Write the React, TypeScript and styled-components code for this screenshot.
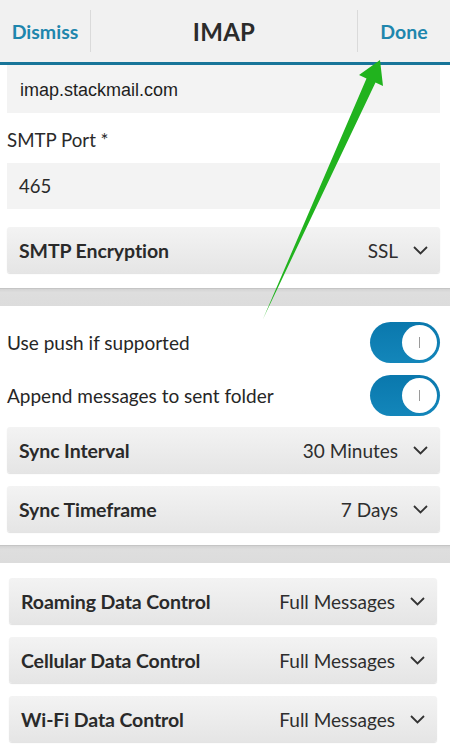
import React from "react"
import styled, { createGlobalStyle } from "styled-components"

const GlobalStyle = createGlobalStyle`
  html, body {
    margin: 0;
    padding: 0;
    background: #ffffff;
  }
  body {
    font-family: Lato, "Open Sans", sans-serif;
    color: #2a2a2a;
  }
`

const Page = styled.div`
  position: relative;
  width: 450px;
  height: 752px;
  overflow: hidden;
  background: #fff;
`

const Header = styled.div`
  display: flex;
  align-items: center;
  height: 62px;
  background: #f1f1f1;
  border-bottom: 3px solid #187599;
`

const HeaderButton = styled.div<{ $width: number }>`
  width: ${(p) => p.$width}px;
  text-align: center;
  font-size: 19.5px;
  font-weight: 700;
  color: #1e86ad;
`

const Title = styled.div`
  flex: 1;
  text-align: center;
  font-size: 24px;
  font-weight: 700;
  color: #2b2b2b;
  letter-spacing: 0.3px;
`

const Divider = styled.div`
  width: 1px;
  height: 42px;
  background: #dadada;
`

const Section = styled.div<{ $top: number; $bottom: number; $left?: number; $right?: number }>`
  display: flex;
  flex-direction: column;
  padding: ${(p) => `${p.$top}px ${p.$right ?? 10}px ${p.$bottom}px ${p.$left ?? 7}px`};
`

const Field = styled.div<{ $height: number }>`
  display: flex;
  align-items: center;
  height: ${(p) => p.$height}px;
  padding-left: 12px;
  background: #f3f3f3;
  font-size: 18.5px;
`

const HostField = styled(Field)`
  font-family: "Liberation Sans", Arial, sans-serif;
  font-size: 18px;
  padding-left: 13px;
  padding-top: 3px;
  box-sizing: border-box;
  color: #1e1e1e;
`

const Label = styled.div`
  display: flex;
  align-items: center;
  height: 50px;
  font-size: 18.7px;
  padding-top: 3px;
  box-sizing: border-box;
`

const Dropdown = styled.div<{ $gap?: number }>`
  display: flex;
  align-items: center;
  height: 46px;
  margin-top: ${(p) => p.$gap ?? 0}px;
  padding: 0 12px 0 12px;
  border-radius: 3px;
  background: linear-gradient(#f3f3f3, #e5e5e5);
  box-shadow: 0 1px 1px rgba(0, 0, 0, 0.12);
`

const DropLabel = styled.div`
  flex: 1;
  font-size: 19.5px;
  font-weight: 700;
  color: #2a2a2a;
  letter-spacing: -0.1px;
`

const DropValue = styled.div`
  font-size: 19px;
  color: #2e2e2e;
  margin-right: 15px;
`

const Band = styled.div`
  height: 17px;
  background: linear-gradient(#d3d3d3, #dedede 20%, #dcdcdc);
  border-top: 1px solid #c5c5c5;
`

const ToggleRow = styled.div`
  display: flex;
  align-items: center;
  justify-content: space-between;
  height: 53px;
`

const ToggleLabel = styled.div`
  font-size: 19px;
  color: #262626;
`

const Track = styled.div`
  display: flex;
  align-items: center;
  justify-content: flex-end;
  width: 70px;
  height: 41px;
  padding-right: 3px;
  box-sizing: border-box;
  border-radius: 21px;
  background: linear-gradient(#0a78ad, #1386ba);
`

const Knob = styled.div`
  display: flex;
  align-items: center;
  justify-content: center;
  width: 35px;
  height: 35px;
  border-radius: 50%;
  background: #fff;
  &::after {
    content: "";
    width: 1px;
    height: 11px;
    background: #9a9a9a;
  }
`

const Overlay = styled.svg`
  position: absolute;
  left: 0;
  top: 0;
  pointer-events: none;
`

const Chevron = () => (
  <svg width="15" height="9" viewBox="0 0 15 9">
    <path d="M1 1 L7.5 7.5 L14 1" fill="none" stroke="#333" strokeWidth="1.8" />
  </svg>
)

const Select = ({ label, value, gap }: { label: string; value: string; gap?: number }) => (
  <Dropdown $gap={gap}>
    <DropLabel>{label}</DropLabel>
    <DropValue>{value}</DropValue>
    <Chevron />
  </Dropdown>
)

const Toggle = ({ label }: { label: string }) => (
  <ToggleRow>
    <ToggleLabel>{label}</ToggleLabel>
    <Track>
      <Knob />
    </Track>
  </ToggleRow>
)

export default function App() {
  return (
    <Page>
      <GlobalStyle />
      <Header>
        <HeaderButton $width={90}>Dismiss</HeaderButton>
        <Divider />
        <Title>IMAP</Title>
        <Divider />
        <HeaderButton $width={92}>Done</HeaderButton>
      </Header>

      <Section $top={0} $bottom={15}>
        <HostField $height={48}>imap.stackmail.com</HostField>
        <Label>SMTP Port *</Label>
        <Field $height={46}>465</Field>
        <Select label="SMTP Encryption" value="SSL" gap={18} />
      </Section>

      <Band />

      <Section $top={10} $bottom={13}>
        <Toggle label="Use push if supported" />
        <Toggle label="Append messages to sent folder" />
        <Select label="Sync Interval" value="30 Minutes" gap={5} />
        <Select label="Sync Timeframe" value="7 Days" gap={13} />
      </Section>

      <Band />

      <Section $top={15} $bottom={9} $left={9} $right={13}>
        <Select label="Roaming Data Control" value="Full Messages" />
        <Select label="Cellular Data Control" value="Full Messages" gap={13} />
        <Select label="Wi-Fi Data Control" value="Full Messages" gap={13} />
      </Section>

      <Overlay width="450" height="752" viewBox="0 0 450 752">
        <polygon
          points="380,60 383,86 375.5,82.5 263,319 366.5,78.5 359,75"
          fill="#21b31e"
        />
      </Overlay>
    </Page>
  )
}
